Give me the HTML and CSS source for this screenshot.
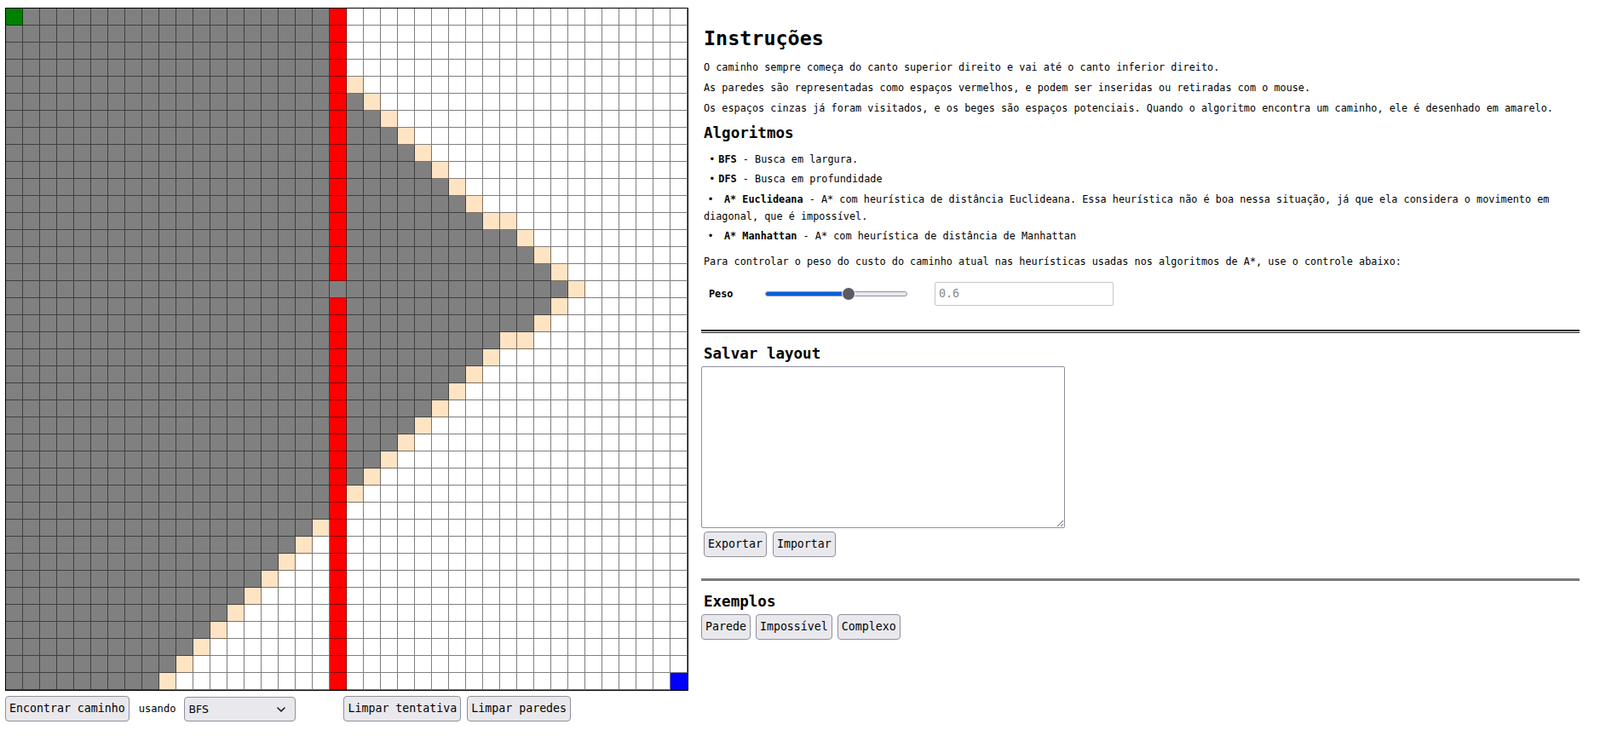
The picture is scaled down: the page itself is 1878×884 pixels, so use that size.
FILE: index.html
```html
<!DOCTYPE html>
<html lang="pt-BR">
<head>
<meta charset="utf-8">
<title>Busca de caminhos</title>
<link rel="stylesheet" href="styles.css">
</head>
<body>
<div class="app">
  <div class="left">
    <div class="board" id="board"></div>
    <div class="controls">
      <button class="btn">Encontrar caminho</button>
      <span class="using">usando</span>
      <span class="select-wrap">
        <select class="select">
          <option>BFS</option>
          <option>DFS</option>
          <option>A* Euclideana</option>
          <option>A* Manhattan</option>
        </select>
        <svg class="chev" width="10" height="6" viewBox="0 0 10 6"><path d="M1 1l4 4 4-4" fill="none" stroke="#1a1a1a" stroke-width="1.6" stroke-linecap="round" stroke-linejoin="round"/></svg>
      </span>
      <span class="clear-group">
        <button class="btn">Limpar tentativa</button>
        <button class="btn">Limpar paredes</button>
      </span>
    </div>
  </div>
  <div class="right">
    <h1 class="title">Instruções</h1>
    <p class="txt">O caminho sempre começa do canto superior direito e vai até o canto inferior direito.</p>
    <p class="txt">As paredes são representadas como espaços vermelhos, e podem ser inseridas ou retiradas com o mouse.</p>
    <p class="txt">Os espaços cinzas já foram visitados, e os beges são espaços potenciais. Quando o algoritmo encontra um caminho, ele é desenhado em amarelo.</p>
    <h2 class="sub sub-alg">Algoritmos</h2>
    <ul class="algs">
      <li><span class="dot">•</span><b>BFS</b> - Busca em largura.</li>
      <li><span class="dot">•</span><b>DFS</b> - Busca em profundidade</li>
      <li><span class="dot dot-wide">•</span><b>A* Euclideana</b> - A* com heurística de distância Euclideana. Essa heurística não é boa nessa situação, já que ela considera o movimento em diagonal, que é impossível.</li>
      <li><span class="dot dot-wide">•</span><b>A* Manhattan</b> - A* com heurística de distância de Manhattan</li>
    </ul>
    <p class="txt txt-ctrl">Para controlar o peso do custo do caminho atual nas heurísticas usadas nos algoritmos de A*, use o controle abaixo:</p>
    <div class="weight">
      <b class="weight-label">Peso</b>
      <input class="range" type="range" min="0" max="1" step="0.1" value="0.6">
      <input class="num" type="text" placeholder="0.6">
    </div>
    <hr class="rule-double">
    <h2 class="sub sub-save">Salvar layout</h2>
    <textarea class="layout"></textarea>
    <div class="row-btns">
      <button class="btn">Exportar</button>
      <button class="btn">Importar</button>
    </div>
    <hr class="rule-thick">
    <h2 class="sub sub-ex">Exemplos</h2>
    <div class="row-btns ex-btns">
      <button class="btn">Parede</button>
      <button class="btn">Impossível</button>
      <button class="btn">Complexo</button>
    </div>
  </div>
</div>
<script src="script.js"></script>
</body>
</html>
```
FILE: styles.css
```css
* { box-sizing: border-box; }
body {
  margin: 0;
  font-family: "DejaVu Sans Mono", monospace;
  font-size: 11.83px;
  color: #000;
  background: #fff;
}
.app {
  display: flex;
  align-items: flex-start;
  gap: 15px;
  padding: 9px 24px 0 6px;
}
.left { flex: none; width: 802px; }
.board {
  display: grid;
  grid-template-columns: repeat(40, 20px);
  grid-auto-rows: 20px;
  width: 802px;
  border: 1px solid #000;
}
.cell {
  border-right: 1px solid rgba(0,0,0,.5);
  border-bottom: 1px solid rgba(0,0,0,.5);
  background: #fff;
}
.cell.visited { background: #808080; }
.cell.frontier { background: #ffe4c4; }
.cell.wall { background: #ff0000; }
.cell.start { background: #008000; }
.cell.end { background: #0000ff; }

.btn {
  font-family: "DejaVu Sans Mono", monospace;
  font-size: 13.27px;
  line-height: 16px;
  padding: 6px 4px;
  color: #000;
  background: #e9e9ed;
  border: 1px solid #8f8f9d;
  border-radius: 4px;
  margin: 0;
}
.controls {
  display: flex;
  align-items: center;
  margin-top: 6px;
}
.using { margin: 0 10px 0 11px; font-size: 12.1px; }
.select-wrap { position: relative; display: inline-block; }
.select {
  appearance: none;
  -webkit-appearance: none;
  width: 131px;
  height: 29px;
  font-family: "DejaVu Sans", sans-serif;
  font-size: 12.5px;
  padding: 0 4px;
  color: #000;
  background: #e9e9ed;
  border: 1px solid #8f8f9d;
  border-radius: 4px;
}
.chev { position: absolute; right: 12px; top: 12px; pointer-events: none; }
.clear-group { display: flex; gap: 7px; margin-left: 56px; }

.right { flex: 1; min-width: 0; }
.title {
  font-size: 23.4px;
  line-height: 28px;
  margin: 22px 0 10px;
  padding-left: 3px;
}
.txt { margin: 4px 0; line-height: 20px; padding-left: 3px; }
.sub {
  font-size: 17.55px;
  line-height: 22px;
  margin: 0;
  padding-left: 3px;
}
.sub-alg { margin-top: 7.6px; }
.algs { list-style: none; padding: 0 0 0 3px; margin: 10.4px 0 0; }
.algs li { line-height: 20px; margin-bottom: 3.3px; }
.dot { display: inline-block; width: 8px; text-align: center; margin: 0 3.5px 0 5.8px; }
.dot-wide { margin: 0 12px 0 4px; }
.txt-ctrl { margin-top: 10px; }
.weight {
  display: flex;
  align-items: center;
  height: 28px;
  margin-top: 14px;
  padding-left: 9px;
}
.weight-label { width: 66px; }
.range {
  -webkit-appearance: none;
  appearance: none;
  width: 167px;
  height: 16px;
  margin: 0;
  background: transparent;
}
.range::-webkit-slider-runnable-track {
  height: 6px;
  border-radius: 3px;
  background: linear-gradient(to right, #0060df 0 60%, #e9e9ed 60% 100%);
  border: 1px solid #8f8f9d;
}
.range::-webkit-slider-thumb {
  -webkit-appearance: none;
  width: 16px;
  height: 16px;
  border-radius: 50%;
  background: #5b5b66;
  border: 1px solid #fff;
  margin-top: -6px;
}
.num {
  margin-left: 32px;
  width: 210px;
  height: 28px;
  font-family: "DejaVu Sans Mono", monospace;
  font-size: 13.33px;
  padding: 2px 4px;
  border: 1px solid #c5c5c5;
  border-radius: 2px;
}
.num::placeholder { color: #8a8a8a; }
.rule-double {
  margin: 28px 0 0;
  height: 4px;
  border: 0;
  border-top: 2px solid #1a1a1a;
  border-bottom: 1px solid #1a1a1a;
}
.sub-save { margin-top: 13px; }
.layout {
  display: block;
  width: 427px;
  height: 190px;
  margin-top: 4px;
  border: 1px solid #8f8f9d;
  border-radius: 2px;
  resize: both;
}
.row-btns { display: flex; gap: 7px; margin-top: 4px; padding-left: 3px; }
.rule-thick {
  margin: 25px 0 0;
  height: 3px;
  border: 0;
  background: #7a7a7a;
}
.sub-ex { margin-top: 13px; }
.ex-btns { padding-left: 0; gap: 6px; }
```
FILE: script.js
```js
(function () {
  var board = document.getElementById('board');
  var N = 40;
  var rightFront = {
    4: [20], 5: [21], 6: [22], 7: [23], 8: [24], 9: [25], 10: [26], 11: [27],
    12: [28, 29], 13: [30], 14: [31], 15: [32], 16: [33], 17: [32], 18: [31],
    19: [29, 30], 20: [28], 21: [27], 22: [26], 23: [25], 24: [24], 25: [23],
    26: [22], 27: [21], 28: [20]
  };
  var frag = document.createDocumentFragment();
  for (var r = 0; r < N; r++) {
    for (var c = 0; c < N; c++) {
      var cls = '';
      if (r === 0 && c === 0) cls = 'start';
      else if (r === N - 1 && c === N - 1) cls = 'end';
      else if (c === 19) cls = (r === 16) ? 'visited' : 'wall';
      else if (c < 19) {
        var d = r + c;
        cls = d < 48 ? 'visited' : (d === 48 ? 'frontier' : '');
      } else {
        var f = rightFront[r];
        if (f) {
          if (f.indexOf(c) >= 0) cls = 'frontier';
          else if (c < f[0]) cls = 'visited';
        }
      }
      var el = document.createElement('div');
      el.className = 'cell' + (cls ? ' ' + cls : '');
      frag.appendChild(el);
    }
  }
  board.appendChild(frag);
})();
```
